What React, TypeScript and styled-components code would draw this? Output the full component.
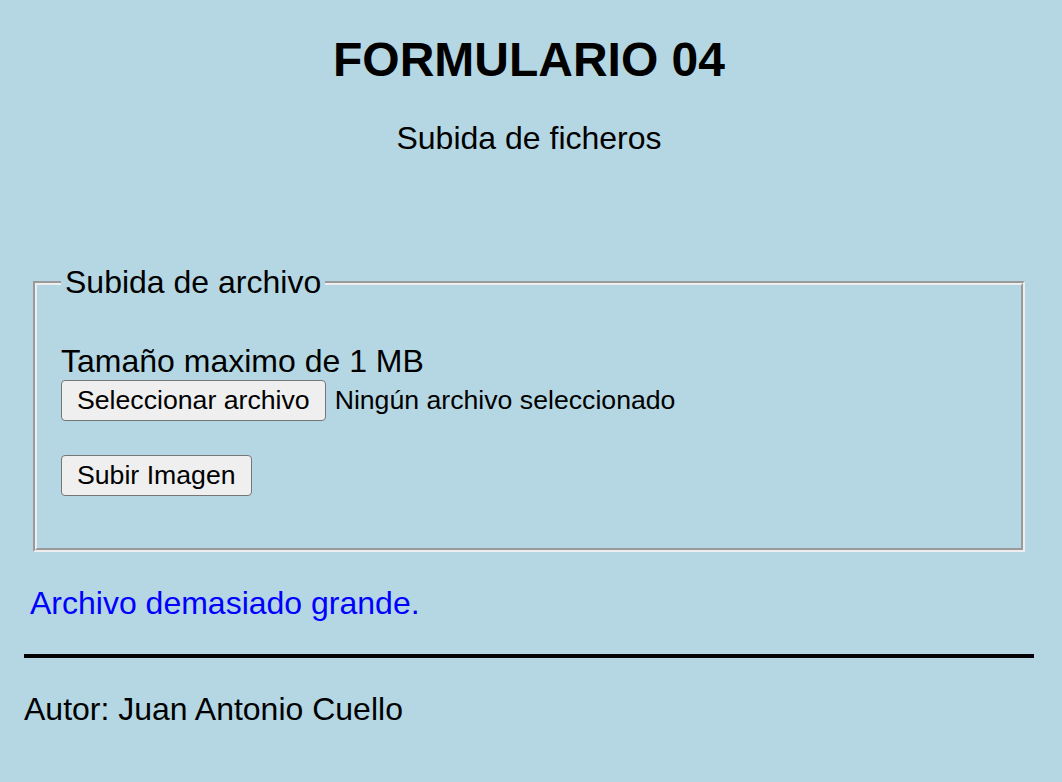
import * as React from 'react';
import styled, { createGlobalStyle } from 'styled-components';

const GlobalStyle = createGlobalStyle`
  html, body {
    margin: 0;
    padding: 0;
    background: #b5d7e3;
  }
  body {
    font-family: "Liberation Sans", Arial, Helvetica, sans-serif;
    color: #000;
    min-height: 782px;
  }
`;

export default function App() {
  return (
    <React.Fragment>
      <GlobalStyle />
      <Page>
        <Title>FORMULARIO 04</Title>
        <Subtitle>Subida de ficheros</Subtitle>

        <form onSubmit={(e) => e.preventDefault()}>
          <UploadBox>
            <Legend>Subida de archivo</Legend>
            <SizeNote>Tamaño maximo de 1 MB</SizeNote>
            <FileRow>
              <FileButton htmlFor="archivo">Seleccionar archivo</FileButton>
              <HiddenInput id="archivo" type="file" name="archivo" />
              <FileName>Ningún archivo seleccionado</FileName>
            </FileRow>
            <SubmitRow>
              <Button type="submit">Subir Imagen</Button>
            </SubmitRow>
          </UploadBox>
        </form>

        <ErrorMessage>Archivo demasiado grande.</ErrorMessage>
        <Rule />
        <Author>Autor: Juan Antonio Cuello</Author>
      </Page>
    </React.Fragment>
  );
}

const Page = styled.div`
  padding: 32px 28px 40px 24px;
`;

const Title = styled.h1`
  margin: 0;
  font-size: 48px;
  font-weight: bold;
  line-height: normal;
  text-align: center;
`;

const Subtitle = styled.p`
  margin: 33px 0 0;
  font-size: 32px;
  line-height: normal;
  text-align: center;
`;

const UploadBox = styled.fieldset`
  margin: 107px 9px 0;
  padding: 0 24px 52px;
  border: 4px groove #eeeeee;
  min-width: 0;
`;

const Legend = styled.legend`
  padding: 0 4px;
  font-size: 32px;
  line-height: normal;
`;

const SizeNote = styled.div`
  margin-top: 42px;
  font-size: 32px;
  line-height: normal;
`;

const FileRow = styled.div`
  display: flex;
  align-items: center;
  gap: 9px;
`;

const buttonLook = `
  display: inline-block;
  box-sizing: border-box;
  padding: 4px 15px;
  border: 1px solid #767676;
  border-radius: 4px;
  background: #efefef;
  color: #000;
  font-family: "Liberation Sans", Arial, Helvetica, sans-serif;
  font-size: 26.67px;
  line-height: normal;
  cursor: default;
`;

const FileButton = styled.label`
  ${buttonLook}
`;

const HiddenInput = styled.input`
  display: none;
`;

const FileName = styled.span`
  font-size: 26.67px;
  line-height: normal;
`;

const SubmitRow = styled.div`
  margin-top: 34px;
`;

const Button = styled.button`
  ${buttonLook}
  margin: 0;
`;

const ErrorMessage = styled.p`
  margin: 33px 0 0;
  padding-left: 6px;
  color: #0000ff;
  font-size: 32px;
  line-height: normal;
`;

const Rule = styled.div`
  margin-top: 32px;
  height: 4px;
  background: #000;
`;

const Author = styled.p`
  margin: 33px 0 0;
  font-size: 32px;
  line-height: normal;
`;
